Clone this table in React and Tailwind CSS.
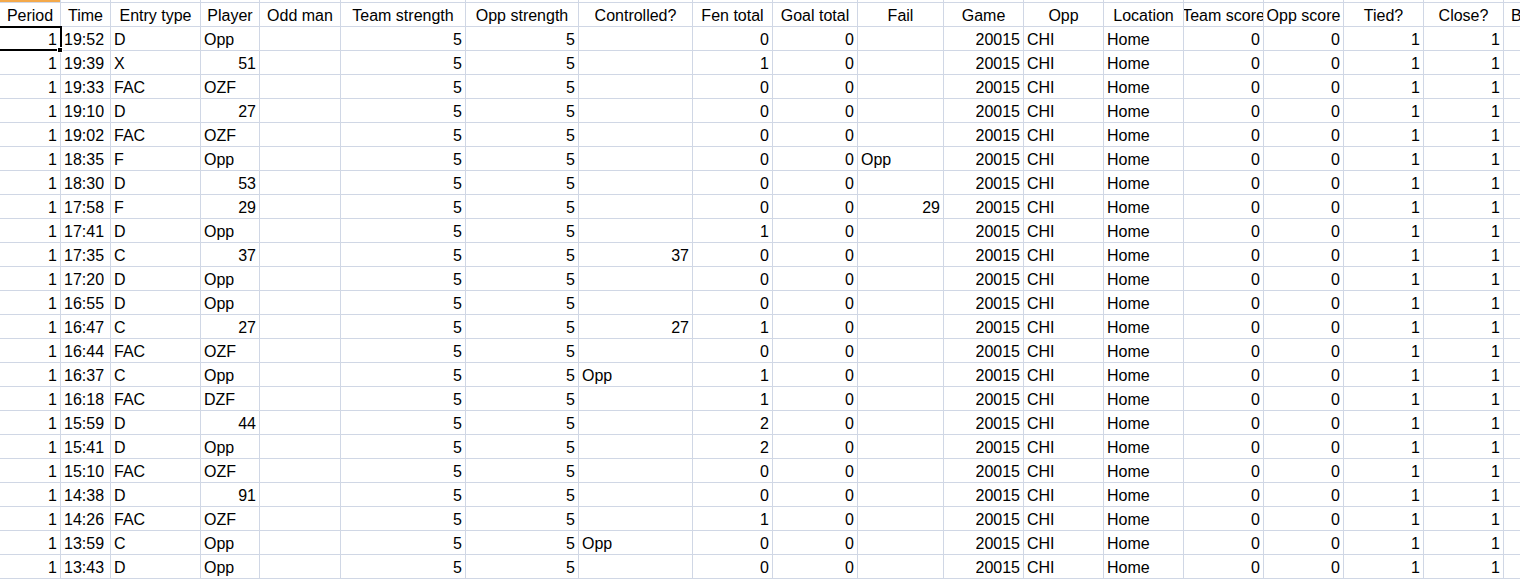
const COLS = [
  { h: "Period", w: 61 },
  { h: "Time", w: 50 },
  { h: "Entry type", w: 90 },
  { h: "Player", w: 59 },
  { h: "Odd man", w: 81 },
  { h: "Team strength", w: 125 },
  { h: "Opp strength", w: 113 },
  { h: "Controlled?", w: 114 },
  { h: "Fen total", w: 80 },
  { h: "Goal total", w: 85 },
  { h: "Fail", w: 86 },
  { h: "Game", w: 80 },
  { h: "Opp", w: 80 },
  { h: "Location", w: 80 },
  { h: "Team score", w: 80 },
  { h: "Opp score", w: 80 },
  { h: "Tied?", w: 80 },
  { h: "Close?", w: 80 },
  { h: "B", w: 80 },
];

// time, entry, player, controlled, fen, fail
const ROWS = [
  ["19:52", "D", "Opp", "", 0, ""],
  ["19:39", "X", 51, "", 1, ""],
  ["19:33", "FAC", "OZF", "", 0, ""],
  ["19:10", "D", 27, "", 0, ""],
  ["19:02", "FAC", "OZF", "", 0, ""],
  ["18:35", "F", "Opp", "", 0, "Opp"],
  ["18:30", "D", 53, "", 0, ""],
  ["17:58", "F", 29, "", 0, 29],
  ["17:41", "D", "Opp", "", 1, ""],
  ["17:35", "C", 37, 37, 0, ""],
  ["17:20", "D", "Opp", "", 0, ""],
  ["16:55", "D", "Opp", "", 0, ""],
  ["16:47", "C", 27, 27, 1, ""],
  ["16:44", "FAC", "OZF", "", 0, ""],
  ["16:37", "C", "Opp", "Opp", 1, ""],
  ["16:18", "FAC", "DZF", "", 1, ""],
  ["15:59", "D", 44, "", 2, ""],
  ["15:41", "D", "Opp", "", 2, ""],
  ["15:10", "FAC", "OZF", "", 0, ""],
  ["14:38", "D", 91, "", 0, ""],
  ["14:26", "FAC", "OZF", "", 1, ""],
  ["13:59", "C", "Opp", "Opp", 0, ""],
  ["13:43", "D", "Opp", "", 0, ""],
];

function Cell({ v, w, selected }) {
  const isNum = typeof v === "number";
  const a = isNum ? "justify-end pr-[3px]" : "justify-start pl-[3px]";
  return (
    <div
      className={`relative flex items-center h-[24px] pt-[2px] shrink-0 whitespace-nowrap border-r border-b border-[#d0d7e5] ${a} ${selected ? "z-10" : ""}`}
      style={{ width: w }}
    >
      <span className="overflow-hidden">{v === "" ? null : v}</span>
      {selected && (
        <>
          <div className="absolute -top-[1px] left-[-2px] right-[-2px] bottom-[-1px] border-2 border-black" />
          <div className="absolute right-[-3px] bottom-[-3px] w-[6px] h-[6px] bg-black border border-white" />
        </>
      )}
    </div>
  );
}

function HeadCell({ v, w, last }) {
  return (
    <div
      className={`flex items-center h-[24px] pt-[2px] shrink-0 overflow-hidden whitespace-nowrap border-r border-b border-[#d0d7e5] ${last ? "justify-start pl-[7px]" : "justify-center"}`}
      style={{ width: w }}
    >
      {v}
    </div>
  );
}

export default function App() {
  return (
    <div
      className="w-[1520px] h-[579px] overflow-hidden bg-white text-black text-[16px] leading-none"
      style={{ fontFamily: '"Liberation Sans", Arial, sans-serif' }}
    >
      <div className="flex">
        {COLS.map((c, i) => (
          <div
            key={i}
            className={`h-[3px] shrink-0 border-r border-b border-[#d0d7e5] ${i === 0 ? "bg-[#f4a94a]" : "bg-white"}`}
            style={{ width: c.w }}
          />
        ))}
      </div>
      <div className="flex">
        {COLS.map((c, i) => (
          <HeadCell key={i} v={c.h} w={c.w} last={i === COLS.length - 1} />
        ))}
      </div>
      {ROWS.map((r, ri) => {
        const vals = [1, r[0], r[1], r[2], "", 5, 5, r[3], r[4], 0, r[5], 20015, "CHI", "Home", 0, 0, 1, 1, ""];
        return (
          <div key={ri} className="flex">
            {vals.map((v, i) => (
              <Cell key={i} v={v} w={COLS[i].w} selected={ri === 0 && i === 0} />
            ))}
          </div>
        );
      })}
    </div>
  );
}
